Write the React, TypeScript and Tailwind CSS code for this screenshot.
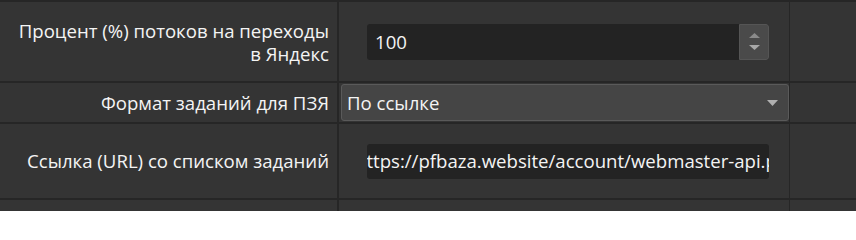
import React from "react";

const font = { fontFamily: '"Open Sans", "Noto Sans", sans-serif' };

const Spinner = () => (
  <div className="flex w-[30px] flex-col items-center justify-center gap-[7px] rounded-r-[3px] border border-[#555] bg-[#4a4a4a]">
    <svg width="11" height="5" viewBox="0 0 11 5">
      <path d="M5.5 0 L11 5 L0 5 Z" fill="#8a8a8a" />
    </svg>
    <svg width="11" height="5" viewBox="0 0 11 5">
      <path d="M0 0 L11 0 L5.5 5 Z" fill="#a8a8a8" />
    </svg>
  </div>
);

export default function App() {
  return (
    <div
      className="h-[211px] w-[856px] overflow-hidden border-t-2 border-[#262626] bg-[#343434] text-[18.6px] text-[#f4f4f4]"
      style={font}
    >
      {/* row 1 */}
      <div className="flex h-[81px] border-b-2 border-[#262626]">
        <div className="flex w-[339px] items-center justify-end border-r-2 border-[#262626] pr-2 text-right leading-[23px]">
          Процент (%) потоков на переходы
          <br />в Яндекс
        </div>
        <div className="flex w-[451px] items-center border-r border-[#262626] pl-[28px] pr-[20px]">
          <div className="flex h-[36px] flex-1 rounded-[3px] bg-[#232323]">
            <span className="flex flex-1 items-center pl-[8px]">100</span>
            <Spinner />
          </div>
        </div>
        <div className="flex-1" />
      </div>
      {/* row 2 */}
      <div className="flex h-[41px] border-b-2 border-[#262626]">
        <div className="flex w-[339px] items-center justify-end border-r-2 border-[#262626] pr-2">
          Формат заданий для ПЗЯ
        </div>
        <div className="flex w-[451px] items-center border-r border-[#262626] pl-[2px] pr-0">
          <div className="flex h-[37px] flex-1 items-center justify-between rounded-[3px] border border-[#5a5a5a] bg-[#454545] pl-[5px] pr-[10px]">
            <span>По ссылке</span>
            <svg width="11" height="6" viewBox="0 0 11 6">
              <path d="M0 0 L11 0 L5.5 6 Z" fill="#b0b0b0" />
            </svg>
          </div>
        </div>
        <div className="flex-1" />
      </div>
      {/* row 3 */}
      <div className="flex h-[76px] border-b-2 border-[#262626]">
        <div className="flex w-[339px] items-center justify-end border-r-2 border-[#262626] pr-2">
          Ссылка (URL) со списком заданий
        </div>
        <div className="flex w-[451px] items-center border-r border-[#262626] pl-[28px] pr-[20px]">
          <div className="flex h-[35px] flex-1 items-center overflow-hidden rounded-[3px] bg-[#232323]">
            <span className="-ml-[12px] whitespace-nowrap">
              https://pfbaza.website/account/webmaster-api.php
            </span>
          </div>
        </div>
        <div className="flex-1" />
      </div>
      {/* row 4 */}
      <div className="flex h-[20px]">
        <div className="w-[339px] border-r-2 border-[#262626]" />
        <div className="w-[451px] border-r border-[#262626]" />
        <div className="flex-1" />
      </div>
    </div>
  );
}
